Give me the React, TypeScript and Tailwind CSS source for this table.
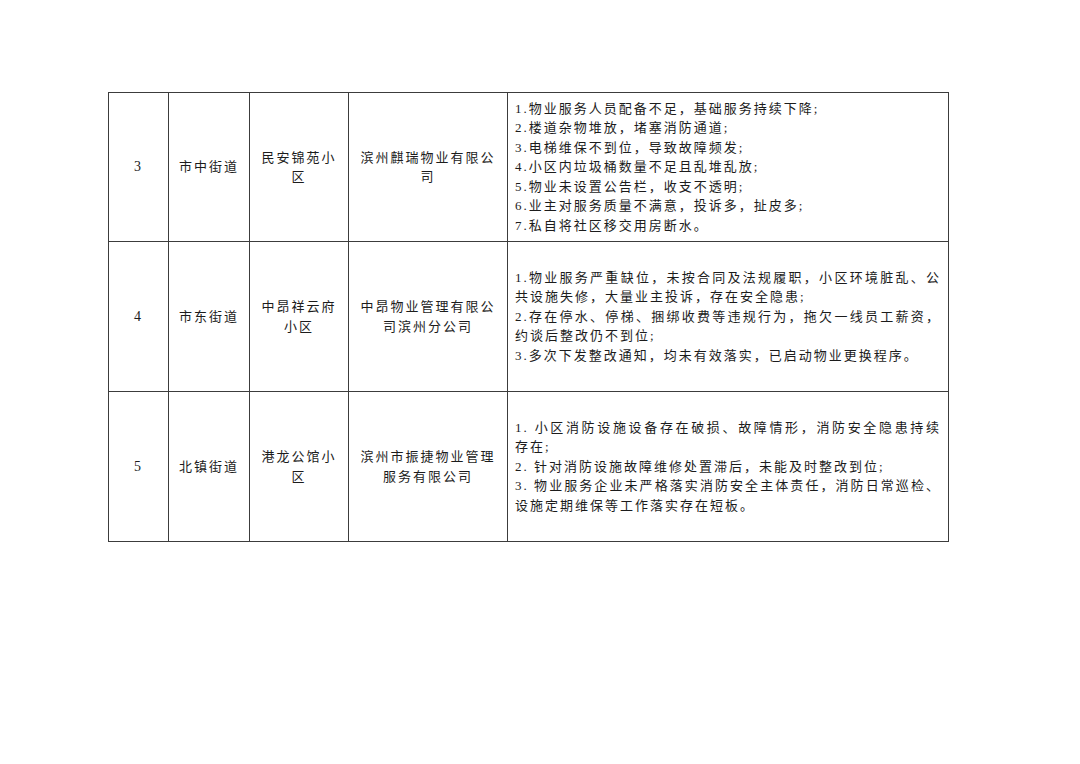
type Row = {
  no: string;
  street: string;
  community: string[];
  company: string[];
  issues: { text: string; full?: boolean }[];
  h: string;
};

const rows: Row[] = [
  {
    no: "3",
    street: "市中街道",
    community: ["民安锦苑小", "区"],
    company: ["滨州麒瑞物业有限公", "司"],
    h: "h-[149px]",
    issues: [
      { text: "1.物业服务人员配备不足，基础服务持续下降;" },
      { text: "2.楼道杂物堆放，堵塞消防通道;" },
      { text: "3.电梯维保不到位，导致故障频发;" },
      { text: "4.小区内垃圾桶数量不足且乱堆乱放;" },
      { text: "5.物业未设置公告栏，收支不透明;" },
      { text: "6.业主对服务质量不满意，投诉多，扯皮多;" },
      { text: "7.私自将社区移交用房断水。" },
    ],
  },
  {
    no: "4",
    street: "市东街道",
    community: ["中昂祥云府", "小区"],
    company: ["中昂物业管理有限公", "司滨州分公司"],
    h: "h-[150px]",
    issues: [
      { text: "1.物业服务严重缺位，未按合同及法规履职，小区环境脏乱、公", full: true },
      { text: "共设施失修，大量业主投诉，存在安全隐患;" },
      { text: "2.存在停水、停梯、捆绑收费等违规行为，拖欠一线员工薪资，", full: true },
      { text: "约谈后整改仍不到位;" },
      { text: "3.多次下发整改通知，均未有效落实，已启动物业更换程序。" },
    ],
  },
  {
    no: "5",
    street: "北镇街道",
    community: ["港龙公馆小", "区"],
    company: ["滨州市振捷物业管理", "服务有限公司"],
    h: "h-[150px]",
    issues: [
      { text: "1. 小区消防设施设备存在破损、故障情形，消防安全隐患持续", full: true },
      { text: "存在;" },
      { text: "2. 针对消防设施故障维修处置滞后，未能及时整改到位;" },
      { text: "3. 物业服务企业未严格落实消防安全主体责任，消防日常巡检、", full: true },
      { text: "设施定期维保等工作落实存在短板。" },
    ],
  },
];

const cell = "border border-[#3c3c3c] align-middle p-0";

export default function App() {
  return (
    <div
      className="w-[1080px] h-[764px] bg-white pt-[92px] pl-[108px] text-[#1c1c1c] text-[13px] leading-[19.5px] tracking-[2px]"
      style={{ fontFamily: '"Liberation Serif", "Noto Sans CJK SC", serif' }}
    >
      <table className="table-fixed border-collapse w-[840px]">
        <colgroup>
          <col className="w-[60px]" />
          <col className="w-[81px]" />
          <col className="w-[99px]" />
          <col className="w-[159px]" />
          <col className="w-[441px]" />
        </colgroup>
        <tbody>
          {rows.map((r) => (
            <tr key={r.no} className={r.h}>
              <td className={`${cell} text-center text-[14px]`}>{r.no}</td>
              <td className={`${cell} text-center`}>{r.street}</td>
              <td className={`${cell} text-center`}>
                {r.community.map((l) => (
                  <div key={l}>{l}</div>
                ))}
              </td>
              <td className={`${cell} text-center`}>
                {r.company.map((l) => (
                  <div key={l}>{l}</div>
                ))}
              </td>
              <td className={`${cell} px-[7px]`}>
                {r.issues.map((l) => (
                  <div
                    key={l.text}
                    className={l.full ? "text-justify [text-align-last:justify] whitespace-nowrap" : "whitespace-nowrap"}
                  >
                    {l.text}
                  </div>
                ))}
              </td>
            </tr>
          ))}
        </tbody>
      </table>
    </div>
  );
}
